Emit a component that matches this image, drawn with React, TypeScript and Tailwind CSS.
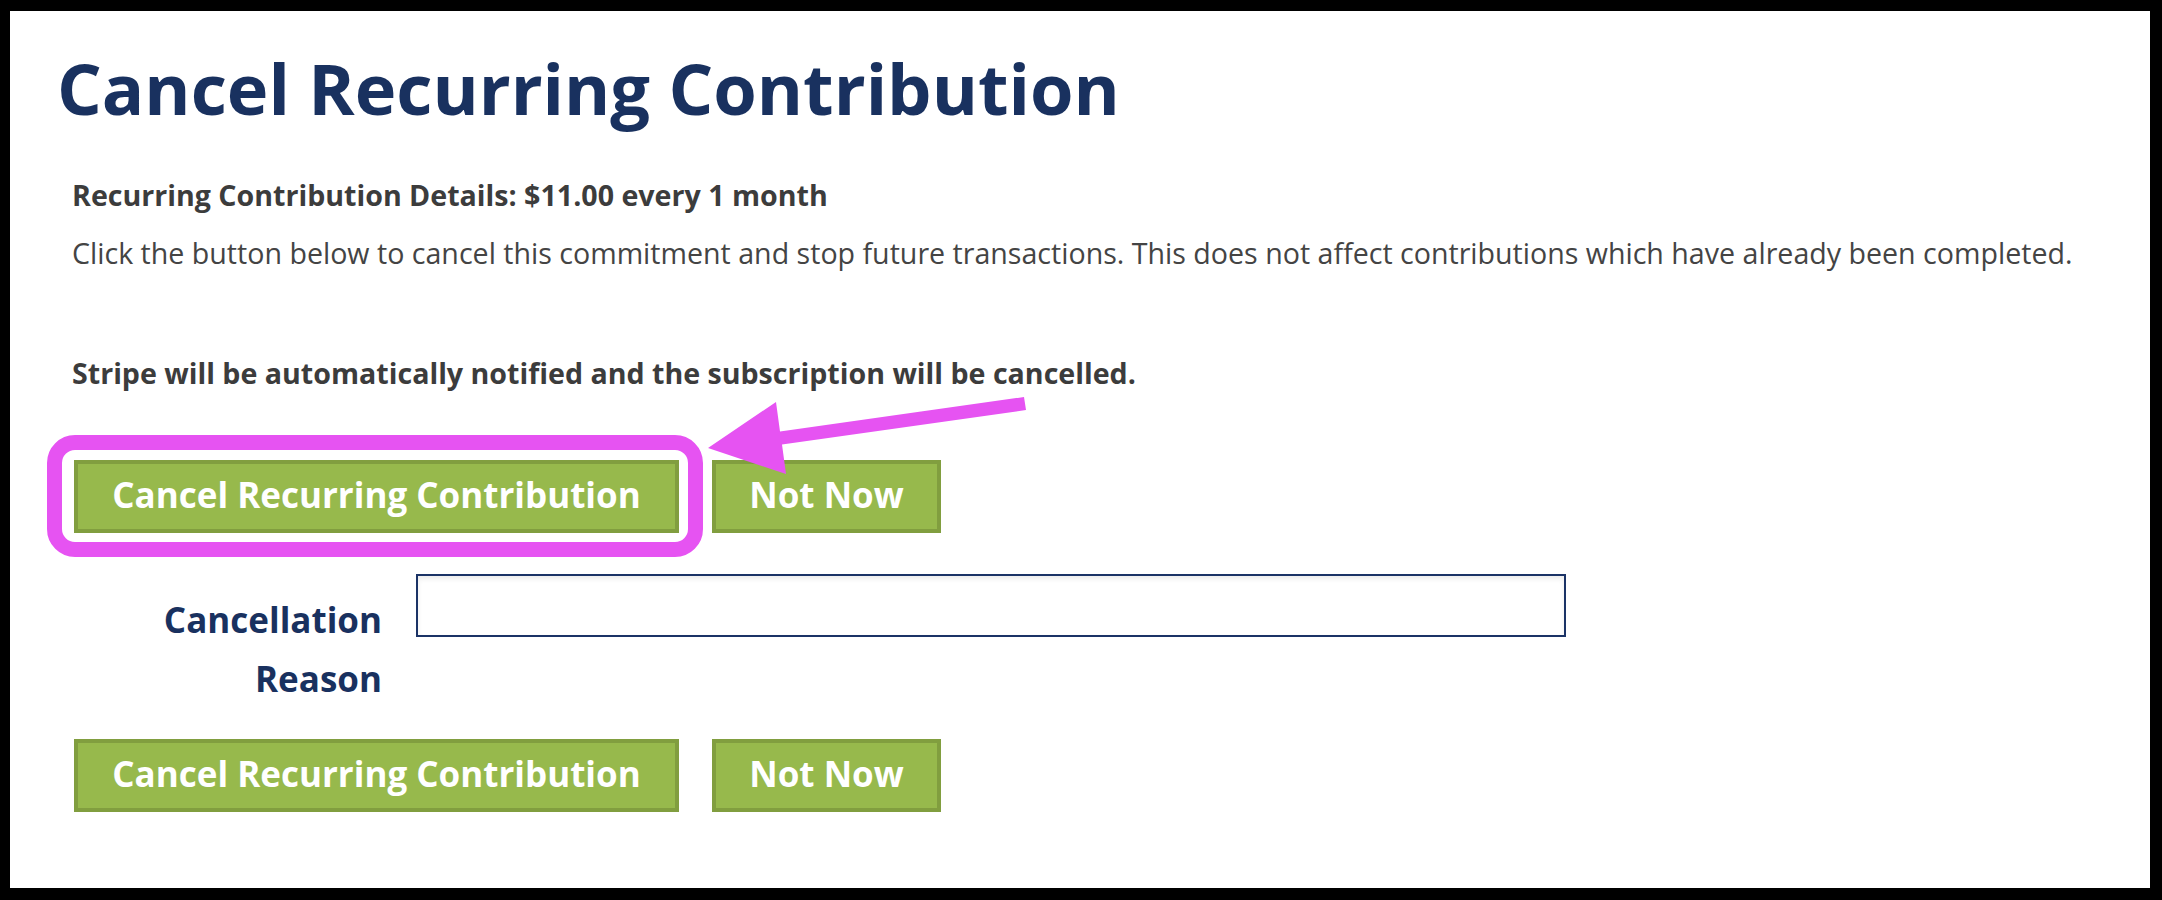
import React from 'react'

const font = { fontFamily: '"Open Sans", "Noto Sans", sans-serif' }

function GreenButton({ label, width }: { label: string; width: string }) {
  return (
    <button
      type="button"
      className={`${width} h-[73px] flex items-center justify-center border-[4px] border-[#819e3f] bg-[#97b94c] text-white text-[35px] font-bold leading-[48px] pb-[3px]`}
    >
      {label}
    </button>
  )
}

export default function App() {
  return (
    <div className="relative w-[2162px] h-[900px] bg-black pt-[11px] pl-[10px] pr-[12px] pb-[12px]" style={font}>
      <div className="h-full bg-white pl-[64px]">
        <h1 className="pt-[42px] -ml-[17px] text-[70.4px] leading-[70px] font-bold text-[#19315f]">
          Cancel Recurring Contribution
        </h1>

        <p className="mt-[54px] -ml-[2px] text-[28.6px] leading-[36px] font-bold text-[#3c3c3c]">
          Recurring Contribution Details: $11.00 every 1 month
        </p>
        <p className="mt-[22px] -ml-[2px] text-[28.6px] leading-[36px] text-[#444444]">
          Click the button below to cancel this commitment and stop future transactions. This does not affect contributions which have already been completed.
        </p>
        <p className="mt-[84px] -ml-[2px] text-[28.6px] leading-[36px] font-bold text-[#3c3c3c]">
          Stripe will be automatically notified and the subscription will be cancelled.
        </p>

        {/* first button row, with the highlight ring around the cancel button */}
        <div className="mt-[69px] flex gap-[33px]">
          <div className="relative">
            <GreenButton label="Cancel Recurring Contribution" width="w-[605px]" />
            <div className="absolute -left-[27px] -top-[25px] -right-[24px] -bottom-[24px] border-[15px] border-[#e653f2] rounded-[28px] pointer-events-none" />
          </div>
          <GreenButton label="Not Now" width="w-[229px]" />
        </div>

        <div className="mt-[41px] flex items-start gap-[34px]">
          <label className="w-[308px] mt-[16px] text-right text-[35px] leading-[59px] font-bold text-[#19315f]">
            Cancellation Reason
          </label>
          <input
            type="text"
            className="w-[1150px] h-[63px] border-2 border-[#1b3366] bg-white shadow-[inset_0_3px_5px_rgba(0,0,0,0.08)] outline-none"
          />
        </div>

        <div className="mt-[31px] flex gap-[33px]">
          <GreenButton label="Cancel Recurring Contribution" width="w-[605px]" />
          <GreenButton label="Not Now" width="w-[229px]" />
        </div>
      </div>

      {/* annotation arrow */}
      <svg className="absolute inset-0 pointer-events-none" width="2162" height="900" viewBox="0 0 2162 900">
        <polygon
          fill="#e653f2"
          points="1024,397 1026,410 782,444.5 786,474 708,448 776,402 780,431.5"
        />
      </svg>
    </div>
  )
}
